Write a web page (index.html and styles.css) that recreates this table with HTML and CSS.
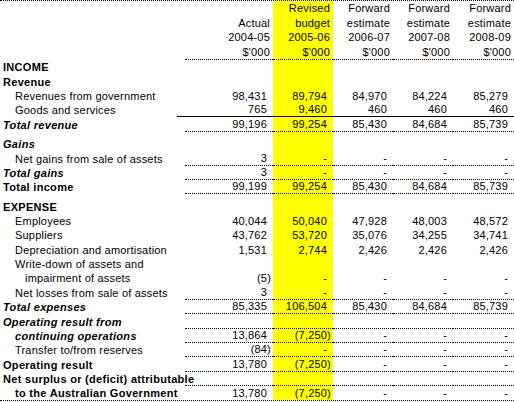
FILE: index.html
```html
<!DOCTYPE html>
<html>
<head>
<meta charset="utf-8">
<title>Budgeted departmental income statement</title>
<link rel="stylesheet" href="styles.css">
</head>
<body>
<table class="sheet">
  <colgroup>
    <col class="c-label"><col class="c-gap"><col class="c-act"><col class="c-rev"><col class="c-fwd"><col class="c-fwd"><col class="c-last">
  </colgroup>
  <thead>
    <tr class="hdr">
      <th class="lab"></th><th class="gap"></th>
      <th class="num">Actual<br>2004-05<br>$'000</th>
      <th class="num">Revised<br>budget<br>2005-06<br>$'000</th>
      <th class="num">Forward<br>estimate<br>2006-07<br>$'000</th>
      <th class="num">Forward<br>estimate<br>2007-08<br>$'000</th>
      <th class="num">Forward<br>estimate<br>2008-09<br>$'000</th>
    </tr>
  </thead>
  <tbody>
    <tr><td class="lab b">INCOME</td><td class="gap"></td><td class="num"></td><td class="num"></td><td class="num"></td><td class="num"></td><td class="num"></td></tr>
    <tr><td class="lab b">Revenue</td><td class="gap"></td><td class="num"></td><td class="num"></td><td class="num"></td><td class="num"></td><td class="num"></td></tr>
    <tr><td class="lab i1">Revenues from government</td><td class="gap"></td><td class="num">98,431</td><td class="num">89,794</td><td class="num">84,970</td><td class="num">84,224</td><td class="num">85,279</td></tr>
    <tr class="solid"><td class="lab i1">Goods and services</td><td class="gap"></td><td class="num">765</td><td class="num">9,460</td><td class="num">460</td><td class="num">460</td><td class="num">460</td></tr>
    <tr class="dot"><td class="lab bi">Total revenue</td><td class="gap"></td><td class="num">99,196</td><td class="num">99,254</td><td class="num">85,430</td><td class="num">84,684</td><td class="num">85,739</td></tr>
    <tr class="sec"><td class="lab bi">Gains</td><td class="gap"></td><td class="num"></td><td class="num"></td><td class="num"></td><td class="num"></td><td class="num"></td></tr>
    <tr class="dot"><td class="lab i1">Net gains from sale of assets</td><td class="gap"></td><td class="num">3</td><td class="num">-</td><td class="num">-</td><td class="num">-</td><td class="num">-</td></tr>
    <tr class="dot"><td class="lab bi">Total gains</td><td class="gap"></td><td class="num">3</td><td class="num">-</td><td class="num">-</td><td class="num">-</td><td class="num">-</td></tr>
    <tr class="dot"><td class="lab b">Total income</td><td class="gap"></td><td class="num">99,199</td><td class="num">99,254</td><td class="num">85,430</td><td class="num">84,684</td><td class="num">85,739</td></tr>
    <tr class="sec"><td class="lab b">EXPENSE</td><td class="gap"></td><td class="num"></td><td class="num"></td><td class="num"></td><td class="num"></td><td class="num"></td></tr>
    <tr><td class="lab i1">Employees</td><td class="gap"></td><td class="num">40,044</td><td class="num">50,040</td><td class="num">47,928</td><td class="num">48,003</td><td class="num">48,572</td></tr>
    <tr><td class="lab i1">Suppliers</td><td class="gap"></td><td class="num">43,762</td><td class="num">53,720</td><td class="num">35,076</td><td class="num">34,255</td><td class="num">34,741</td></tr>
    <tr><td class="lab i1">Depreciation and amortisation</td><td class="gap"></td><td class="num">1,531</td><td class="num">2,744</td><td class="num">2,426</td><td class="num">2,426</td><td class="num">2,426</td></tr>
    <tr><td class="lab i1">Write-down of assets and</td><td class="gap"></td><td class="num"></td><td class="num"></td><td class="num"></td><td class="num"></td><td class="num"></td></tr>
    <tr><td class="lab i2">impairment of assets</td><td class="gap"></td><td class="num neg">(5)</td><td class="num">-</td><td class="num">-</td><td class="num">-</td><td class="num">-</td></tr>
    <tr class="dot"><td class="lab i1">Net losses from sale of assets</td><td class="gap"></td><td class="num">3</td><td class="num">-</td><td class="num">-</td><td class="num">-</td><td class="num">-</td></tr>
    <tr class="dot"><td class="lab bi">Total expenses</td><td class="gap"></td><td class="num">85,335</td><td class="num">106,504</td><td class="num">85,430</td><td class="num">84,684</td><td class="num">85,739</td></tr>
    <tr class="dot"><td class="lab bi">Operating result from</td><td class="gap"></td><td class="num"></td><td class="num"></td><td class="num"></td><td class="num"></td><td class="num"></td></tr>
    <tr class="dot"><td class="lab bi i1">continuing operations</td><td class="gap"></td><td class="num">13,864</td><td class="num neg">(7,250)</td><td class="num">-</td><td class="num">-</td><td class="num">-</td></tr>
    <tr class="dot"><td class="lab i1">Transfer to/from reserves</td><td class="gap"></td><td class="num neg">(84)</td><td class="num">-</td><td class="num">-</td><td class="num">-</td><td class="num">-</td></tr>
    <tr class="dot"><td class="lab b">Operating result</td><td class="gap"></td><td class="num">13,780</td><td class="num neg">(7,250)</td><td class="num">-</td><td class="num">-</td><td class="num">-</td></tr>
    <tr class="dot"><td class="lab b">Net surplus or (deficit) attributable</td><td class="gap"></td><td class="num"></td><td class="num"></td><td class="num"></td><td class="num"></td><td class="num"></td></tr>
    <tr class="last"><td class="lab b i1">to the Australian Government</td><td class="gap"></td><td class="num">13,780</td><td class="num neg">(7,250)</td><td class="num">-</td><td class="num">-</td><td class="num">-</td></tr>
  </tbody>
</table>
</body>
</html>
```

FILE: styles.css
```css
html, body {
  margin: 0;
  padding: 0;
  background: #ffffff;
}

body {
  font-family: "Liberation Sans", Arial, sans-serif;
  font-size: 11px;
  letter-spacing: 0.2px;
  color: #000000;
}

.sheet {
  width: 514px;
  table-layout: fixed;
  border-collapse: separate;
  border-spacing: 0;
  border-top: 1px dotted #000;
  border-bottom: 1px dotted #000;
}

.c-label { width: 177px; }
.c-gap { width: 8px; }
.c-act { width: 88px; }
.c-rev { width: 60px; background: #ffff00; }
.c-fwd { width: 60px; }
.c-last { width: 61px; }

.sheet th,
.sheet td {
  padding: 0;
  white-space: nowrap;
  overflow: visible;
  vertical-align: bottom;
}

.sheet th {
  font-weight: normal;
  line-height: 14.5px;
}

.hdr th.num {
  text-align: right;
  padding-right: 3px;
  border-bottom: 1px dotted #000;
}

.sheet tbody tr {
  height: 14.35px;
}

.sheet tbody tr.sec {
  height: 19.5px;
}

.sheet td {
  line-height: 13px;
}

.sheet td.num {
  text-align: right;
  padding-right: 6px;
}

.sheet td.num.neg {
  padding-right: 2px;
}

.lab {
  padding-left: 3px !important;
}

.lab.i1 {
  padding-left: 15px !important;
}

.lab.i2 {
  padding-left: 25px !important;
}

.b {
  font-weight: bold;
  letter-spacing: 0.3px;
}

.bi {
  font-weight: bold;
  font-style: italic;
  letter-spacing: 0.3px;
}

.dot td.num {
  border-bottom: 1px dotted #000;
}

.solid td.num,
.solid td.gap {
  border-bottom: 1px solid #000;
}
```
